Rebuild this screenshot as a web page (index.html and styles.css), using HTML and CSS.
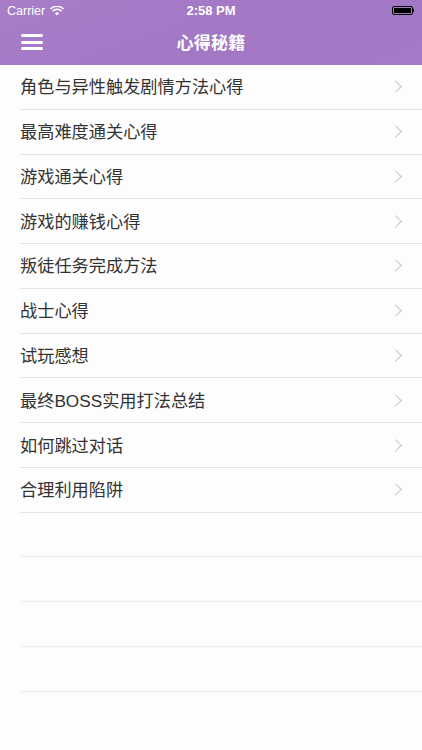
FILE: index.html
```html
<!DOCTYPE html>
<html lang="zh-CN">
<head>
    <meta charset="UTF-8">
    <meta name="viewport" content="width=device-width, initial-scale=1.0">
    <title>心得秘籍</title>
    <link rel="stylesheet" href="styles.css">
</head>
<body>
    <div id="app">
        <header class="top-bar">
            <div class="status-bar">
                <div class="status-left">
                    <span>Carrier</span>
                    <svg class="wifi" width="14" height="10" viewBox="0 0 14 10">
                        <path d="M7 9.6 L4.9 7.3 A3 3 0 0 1 9.1 7.3 Z" fill="#fff"/>
                        <path d="M2.6 5.1 A6.3 6.3 0 0 1 11.4 5.1" stroke="#fff" stroke-width="1.5" fill="none"/>
                        <path d="M0.5 2.9 A9.3 9.3 0 0 1 13.5 2.9" stroke="#fff" stroke-width="1.5" fill="none"/>
                    </svg>
                </div>
                <div class="status-time">2:58 PM</div>
                <div class="status-right">
                    <span class="battery"><span class="battery-fill"></span></span><span class="battery-tip"></span>
                </div>
            </div>
            <nav class="nav-bar">
                <button class="menu-btn" aria-label="menu">
                    <span></span><span></span><span></span>
                </button>
                <h1>心得秘籍</h1>
            </nav>
        </header>

        <ul class="tip-list">
            <li><span>角色与异性触发剧情方法心得</span><i class="chevron"></i></li>
            <li><span>最高难度通关心得</span><i class="chevron"></i></li>
            <li><span>游戏通关心得</span><i class="chevron"></i></li>
            <li><span>游戏的赚钱心得</span><i class="chevron"></i></li>
            <li><span>叛徒任务完成方法</span><i class="chevron"></i></li>
            <li><span>战士心得</span><i class="chevron"></i></li>
            <li><span>试玩感想</span><i class="chevron"></i></li>
            <li><span>最终BOSS实用打法总结</span><i class="chevron"></i></li>
            <li><span>如何跳过对话</span><i class="chevron"></i></li>
            <li><span>合理利用陷阱</span><i class="chevron"></i></li>
            <li class="empty"></li>
            <li class="empty"></li>
            <li class="empty"></li>
            <li class="empty"></li>
        </ul>
    </div>
</body>
</html>
```

FILE: styles.css
```css
body {
    margin: 0;
    padding: 0;
    background: #fdfdfd;
    font-family: 'Liberation Sans', 'Noto Sans CJK SC', sans-serif;
    color: #333;
}

#app {
    width: 422px;
    height: 750px;
    overflow: hidden;
}

.top-bar {
    background: linear-gradient(160deg, #a87dc8, #a277c4 60%, #a47bc6);
    color: #fff;
    height: 65px;
}

.status-bar {
    height: 21px;
    display: grid;
    grid-template-columns: 1fr auto 1fr;
    align-items: center;
    padding: 0 7px;
    font-size: 12.5px;
}

.status-left {
    display: flex;
    align-items: center;
    gap: 5px;
}

.status-time {
    font-weight: bold;
    font-size: 13px;
}

.status-right {
    display: flex;
    justify-content: flex-end;
    align-items: center;
    padding-right: 1px;
}

.battery {
    width: 21px;
    height: 9px;
    border: 1px solid #000;
    border-radius: 2px;
    box-sizing: border-box;
    padding: 1px;
    display: flex;
}

.battery-fill {
    flex: 1;
    background: #000;
}

.battery-tip {
    width: 1.5px;
    height: 3px;
    background: #000;
}

.nav-bar {
    height: 44px;
    display: flex;
    align-items: center;
    justify-content: center;
    position: relative;
}

.nav-bar h1 {
    margin: 0 0 3px;
    font-size: 17px;
    font-weight: bold;
    letter-spacing: 0.3px;
}

.menu-btn {
    position: absolute;
    left: 21px;
    top: 13px;
    width: 22px;
    height: 16px;
    padding: 0;
    border: none;
    background: none;
    display: flex;
    flex-direction: column;
    justify-content: space-between;
}

.menu-btn span {
    display: block;
    height: 3px;
    border-radius: 1.5px;
    background: #fff;
}

.tip-list {
    list-style: none;
    margin: 0;
    padding: 0 0 0 20px;
}

.tip-list li {
    height: 43.77px;
    border-bottom: 1px solid #e3e3e6;
    display: flex;
    align-items: center;
    justify-content: space-between;
    padding-right: 22px;
    font-size: 17.2px;
    color: #333;
}

.tip-list li span {
    margin-top: -2px;
}

.tip-list li.empty {
    border-bottom-color: #ececef;
}

.chevron {
    width: 8px;
    height: 8px;
    border-top: 1.5px solid #c4c4c8;
    border-right: 1.5px solid #c4c4c8;
    transform: rotate(45deg);
}
```
